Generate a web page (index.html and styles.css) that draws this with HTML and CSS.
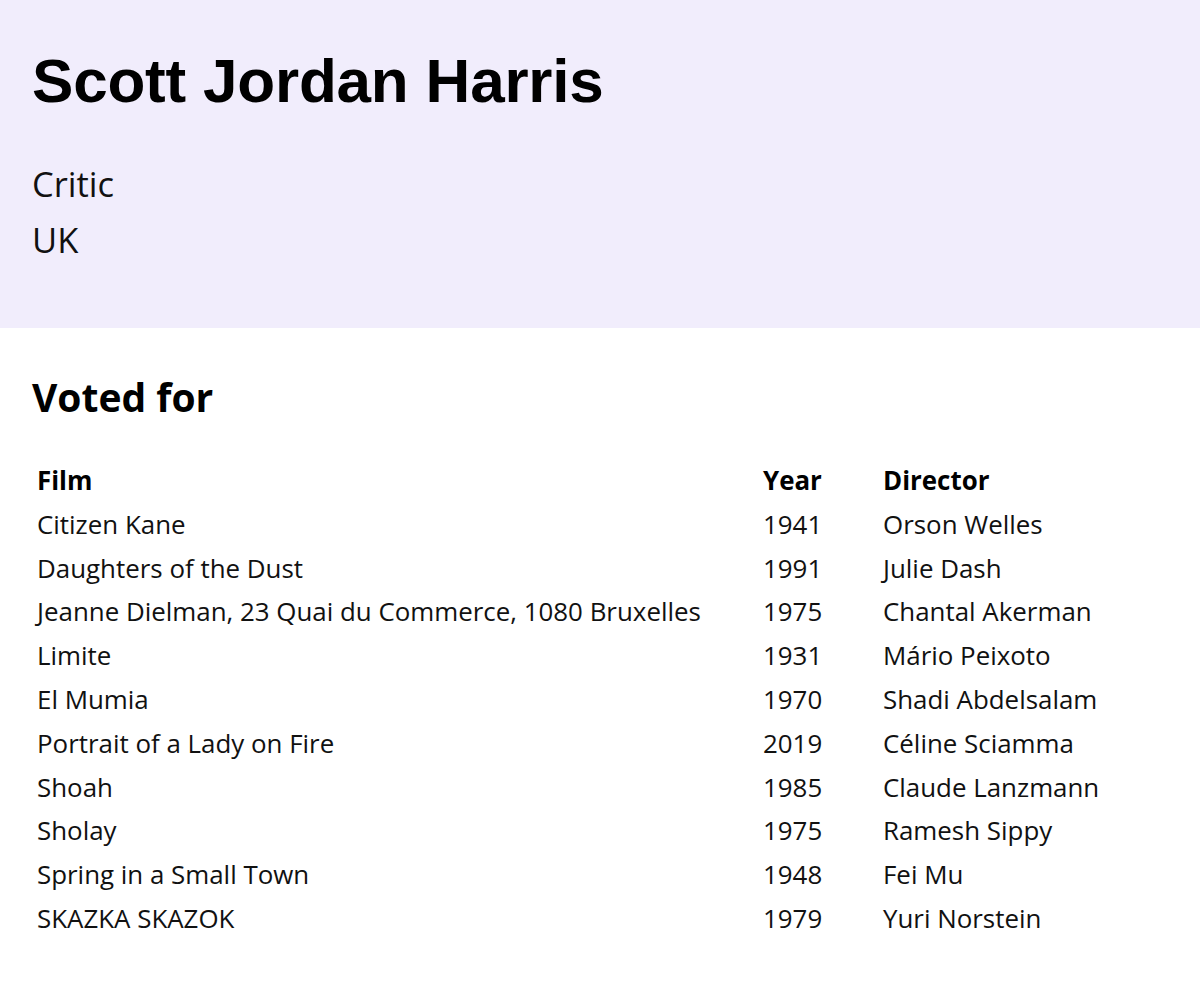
FILE: index.html
```html
<!DOCTYPE html>
<html lang="en">
<head>
<meta charset="utf-8">
<title>Scott Jordan Harris</title>
<link rel="stylesheet" href="styles.css">
</head>
<body>
<header class="profile">
  <h1 class="name">Scott Jordan Harris</h1>
  <div class="meta">
    <p class="meta-line">Critic</p>
    <p class="meta-line">UK</p>
  </div>
</header>
<main class="votes">
  <h2 class="votes-title">Voted for</h2>
  <table class="films">
    <thead>
      <tr><th class="col-film">Film</th><th class="col-year">Year</th><th class="col-dir">Director</th></tr>
    </thead>
    <tbody>
      <tr><td>Citizen Kane</td><td>1941</td><td>Orson Welles</td></tr>
      <tr><td>Daughters of the Dust</td><td>1991</td><td>Julie Dash</td></tr>
      <tr><td>Jeanne Dielman, 23 Quai du Commerce, 1080 Bruxelles</td><td>1975</td><td>Chantal Akerman</td></tr>
      <tr><td>Limite</td><td>1931</td><td>Mário Peixoto</td></tr>
      <tr><td>El Mumia</td><td>1970</td><td>Shadi Abdelsalam</td></tr>
      <tr><td>Portrait of a Lady on Fire</td><td>2019</td><td>Céline Sciamma</td></tr>
      <tr><td>Shoah</td><td>1985</td><td>Claude Lanzmann</td></tr>
      <tr><td>Sholay</td><td>1975</td><td>Ramesh Sippy</td></tr>
      <tr><td>Spring in a Small Town</td><td>1948</td><td>Fei Mu</td></tr>
      <tr><td>SKAZKA SKAZOK</td><td>1979</td><td>Yuri Norstein</td></tr>
    </tbody>
  </table>
</main>
</body>
</html>
```

FILE: styles.css
```css
* { box-sizing: border-box; }
html, body { margin: 0; padding: 0; background: #fff; }
body {
  font-family: "Open Sans", "Noto Sans", sans-serif;
  color: #111;
}
.profile {
  background: #f1edfc;
  padding: 44px 32px 60px;
}
.name {
  margin: 0;
  font-family: "Liberation Sans", Arial, sans-serif;
  font-weight: 700;
  font-size: 62px;
  line-height: 74px;
  letter-spacing: -0.2px;
  color: #000;
}
.meta { margin-top: 38px; }
.meta-line {
  margin: 0;
  font-size: 34.5px;
  line-height: 56px;
  color: #111;
}
.votes {
  padding: 43px 32px 40px;
}
.votes-title {
  margin: 0;
  font-size: 39px;
  font-weight: 700;
  line-height: 51px;
  color: #000;
}
.films {
  margin-top: 37px;
  border-collapse: collapse;
  font-size: 25.9px;
  line-height: 43.8px;
}
.films th, .films td {
  padding: 0 0 0 5px;
  text-align: left;
  vertical-align: top;
  white-space: nowrap;
}
.films th { font-weight: 700; color: #000; }
.col-film { width: 726px; }
.col-year { width: 120px; }
```
